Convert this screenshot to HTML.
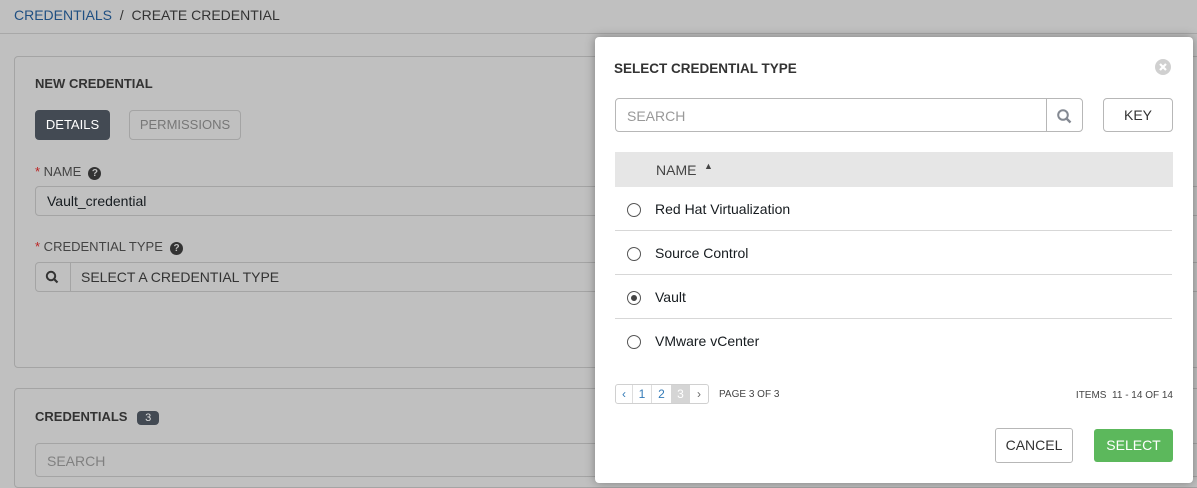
<!DOCTYPE html>
<html style="width:1197px;height:488px;overflow:hidden"><head><style>
*{box-sizing:border-box;margin:0;padding:0}
body{width:1197px;height:488px;overflow:hidden;background:#c0c0c0;font-family:"Liberation Sans",sans-serif;position:relative;color:#161b1f}
.abs{position:absolute}
.bc{left:14px;top:7px;font-size:14px;color:#333}
.bc a{color:#1f4f82;text-decoration:none}
.hr{left:0;top:33px;width:1197px;height:1px;background:#a8a8a8}
.panel{border:1px solid #a4a4a4;border-radius:4px;background:#c0c0c0}
.h{font-weight:bold;font-size:13px;color:#333}
.inp{border:1px solid #a4a4a4;border-radius:4px;background:#c0c0c0;font-size:14px}
.modal{left:595px;top:37px;width:598px;height:446px;background:#fff;border-radius:4px;box-shadow:0 0 10px rgba(0,0,0,.35)}
.row{left:20px;width:557px;height:44px;border-bottom:1px solid #d7d7d7;font-size:14px;color:#161b1f}
.radio{position:absolute;left:12px;top:16px;width:14px;height:14px;border:1px solid #555;border-radius:50%}
.row span{position:absolute;left:40px;top:14px}
</style></head><body>
<div class="abs bc"><a>CREDENTIALS</a>&nbsp; / &nbsp;CREATE CREDENTIAL</div>
<div class="abs hr"></div>
<div class="abs panel" style="left:14px;top:56px;width:1190px;height:312px"></div>
<div class="abs h" style="left:35px;top:76px">NEW CREDENTIAL</div>
<div class="abs" style="left:35px;top:110px;width:75px;height:30px;background:#434a53;border-radius:4px;color:#fff;font-size:13px;text-align:center;line-height:30px">DETAILS</div>
<div class="abs" style="left:129px;top:110px;width:112px;height:30px;border:1px solid #a4a4a4;border-radius:4px;color:#777;font-size:13px;text-align:center;line-height:28px">PERMISSIONS</div>
<div class="abs" style="left:35px;top:164px;font-size:13px;color:#444"><span style="color:#b22">*</span> NAME &nbsp;<span style="display:inline-block;width:13px;height:13px;border-radius:50%;background:#333;color:#c0c0c0;font-size:10px;font-weight:bold;text-align:center;line-height:13px">?</span></div>
<div class="abs inp" style="left:35px;top:186px;width:1200px;height:30px;padding:6px 11px">Vault_credential</div>
<div class="abs" style="left:35px;top:239px;font-size:13px;color:#444"><span style="color:#b22">*</span> CREDENTIAL TYPE &nbsp;<span style="display:inline-block;width:13px;height:13px;border-radius:50%;background:#333;color:#c0c0c0;font-size:10px;font-weight:bold;text-align:center;line-height:13px">?</span></div>
<div class="abs inp" style="left:35px;top:262px;width:1200px;height:30px"></div>
<div class="abs" style="left:70px;top:262px;width:1px;height:30px;background:#a4a4a4"></div>
<svg class="abs" style="left:45px;top:270px" width="14" height="14" viewBox="0 0 14 14"><circle cx="6" cy="6" r="4.2" fill="none" stroke="#333" stroke-width="2"/><path d="M9 9l3.5 3.5" stroke="#333" stroke-width="2.2"/></svg>
<div class="abs" style="left:81px;top:269px;font-size:14px;color:#333">SELECT A CREDENTIAL TYPE</div>
<div class="abs panel" style="left:14px;top:388px;width:1190px;height:100px"></div>
<div class="abs h" style="left:35px;top:409px">CREDENTIALS <span style="display:inline-block;margin-left:6px;background:#434a53;color:#ddd;border-radius:4px;font-size:11px;font-weight:normal;padding:0 8px;line-height:14px">3</span></div>
<div class="abs inp" style="left:35px;top:443px;width:1200px;height:34px;padding:9px 11px;color:#808080">SEARCH</div>

<div class="abs modal">
 <div class="abs h" style="left:19px;top:24px;font-size:13.5px">SELECT CREDENTIAL TYPE</div>
 <svg class="abs" style="left:560px;top:22px" width="16" height="16" viewBox="0 0 16 16"><circle cx="8" cy="8" r="8" fill="#d0d0d0"/><path d="M5 5l6 6M11 5l-6 6" stroke="#fff" stroke-width="2.2"/></svg>
 <div class="abs" style="left:20px;top:61px;width:468px;height:34px;border:1px solid #b7b7b7;border-radius:4px;font-size:14px;color:#999;padding:9px 11px">SEARCH</div>
 <div class="abs" style="left:451px;top:61px;width:1px;height:34px;background:#b7b7b7"></div>
 <svg class="abs" style="left:461px;top:71px" width="16" height="16" viewBox="0 0 16 16"><circle cx="7" cy="7" r="4.8" fill="none" stroke="#848992" stroke-width="2"/><path d="M10.5 10.5l4 4" stroke="#848992" stroke-width="2.4"/></svg>
 <div class="abs" style="left:508px;top:61px;width:70px;height:34px;border:1px solid #b7b7b7;border-radius:4px;font-size:14px;color:#333;text-align:center;line-height:32px">KEY</div>
 <div class="abs" style="left:20px;top:115px;width:558px;height:35px;background:#e6e6e6;font-size:14px;color:#444"><span style="position:absolute;left:41px;top:10px">NAME</span><span style="position:absolute;left:89px;top:9px;font-size:9px">&#9650;</span></div>
 <div class="abs row" style="top:150px"><div class="radio"></div><span>Red Hat Virtualization</span></div>
 <div class="abs row" style="top:194px"><div class="radio"></div><span>Source Control</span></div>
 <div class="abs row" style="top:238px"><div class="radio"><div style="position:absolute;left:3px;top:3px;width:6px;height:6px;border-radius:50%;background:#444"></div></div><span>Vault</span></div>
 <div class="abs row" style="top:282px;border-bottom:none"><div class="radio"></div><span>VMware vCenter</span></div>
 <div class="abs" style="left:20px;top:347px;width:94px;height:20px;border:1px solid #d0d0d0;border-radius:3px;font-size:12px;display:flex;overflow:hidden">
  <div style="width:17px;text-align:center;color:#337ab7;line-height:18px;border-right:1px solid #ddd">&#8249;</div>
  <div style="width:19px;text-align:center;color:#337ab7;line-height:18px;border-right:1px solid #ddd">1</div>
  <div style="width:19px;text-align:center;color:#337ab7;line-height:18px">2</div>
  <div style="width:19px;text-align:center;color:#fff;background:#d5d5d5;line-height:18px">3</div>
  <div style="flex:1;text-align:center;color:#666;line-height:18px">&#8250;</div>
 </div>
 <div class="abs" style="left:124px;top:352px;font-size:10px;color:#444">PAGE 3 OF 3</div>
 <div class="abs" style="left:470px;top:353px;width:108px;text-align:right;font-size:10px;color:#444">ITEMS &nbsp;11 - 14 OF 14</div>
 <div class="abs" style="left:400px;top:391px;width:78px;height:35px;border:1px solid #b7b7b7;border-radius:3px;font-size:14px;color:#333;text-align:center;line-height:33px">CANCEL</div>
 <div class="abs" style="left:499px;top:392px;width:79px;height:33px;background:#5cb85c;border-radius:3px;font-size:14px;color:#fff;text-align:center;line-height:33px">SELECT</div>
</div>
</body></html>
